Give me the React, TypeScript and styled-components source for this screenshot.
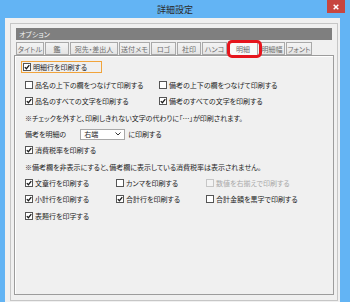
import React from "react";
import styled, { createGlobalStyle } from "styled-components";

const GlobalStyle = createGlobalStyle`
  html, body {
    margin: 0;
    padding: 0;
  }
  body {
    width: 350px;
    height: 302px;
    overflow: hidden;
    background: #63b4f4;
    font-family: "Noto Sans CJK JP", "Noto Sans", sans-serif;
    font-feature-settings: "palt";
  }
`;

const Window = styled.div`
  display: flex;
  flex-direction: column;
  width: 350px;
  height: 306px;
  background: #63b4f4;
  overflow: hidden;
`;

const TitleBar = styled.div`
  display: grid;
  grid-template-columns: 1fr auto 1fr;
  align-items: start;
  height: 18px;
  flex-shrink: 0;
`;

const Caption = styled.div`
  grid-column: 2;
  font-size: 9px;
  line-height: 20px;
  color: #2b2b2b;
`;

const CloseButton = styled.div`
  grid-column: 3;
  justify-self: end;
  width: 18px;
  height: 13px;
  margin-right: 5px;
  background: #c7463f;
  display: flex;
  align-items: center;
  justify-content: center;
`;

const Client = styled.div`
  flex: 1;
  margin: 0 10px 0 5px;
  padding: 5px 2px 0 5px;
  background: #f0f0f0;
`;

const Frame = styled.div`
  display: flex;
  flex-direction: column;
  box-sizing: border-box;
  height: 278px;
  border: 1px solid #c6c6c6;
  padding: 3px 3px 5px;
`;

const Header = styled.div`
  height: 12px;
  margin: 1px 2px 0;
  padding-left: 3px;
  background: #7f7f7f;
  color: #f4f4f4;
  font-size: 7px;
  line-height: 12px;
`;

const TabStrip = styled.div`
  display: flex;
  align-items: flex-end;
  gap: 1px;
  height: 15px;
  padding-left: 2px;
`;

const Tab = styled.div<{ $w: number; $active?: boolean }>`
  position: relative;
  z-index: ${(p) => (p.$active ? 1 : 0)};
  box-sizing: border-box;
  width: ${(p) => p.$w}px;
  height: ${(p) => (p.$active ? 15 : 13)}px;
  margin-bottom: ${(p) => (p.$active ? -1 : 0)}px;
  border: 1px solid #a9a9a9;
  border-bottom: ${(p) => (p.$active ? "none" : "1px solid #a9a9a9")};
  background: ${(p) =>
    p.$active ? "#f9f9f9" : "linear-gradient(#f4f4f4, #e4e4e4)"};
  color: #6e6e6e;
  font-size: 7px;
  display: flex;
  align-items: center;
  justify-content: center;
  white-space: nowrap;

  ${(p) =>
    p.$active &&
    `
    &::after {
      content: "";
      position: absolute;
      left: -2px;
      right: -5px;
      top: -2px;
      bottom: -2px;
      border: 3px solid #e6141c;
      border-radius: 5px;
    }
  `}
`;

const Panel = styled.div`
  flex: 1;
  display: flex;
  flex-direction: column;
  border: 1px solid #9c9c9c;
  box-shadow: inset 1px 1px 0 #fff;
  background: #f0f0f0;
  padding: 5px 0 0 10px;
  color: #1e1e1e;
  font-size: 7px;
`;

const FocusRow = styled.div`
  display: flex;
  align-items: center;
  align-self: flex-start;
  box-sizing: border-box;
  width: 81px;
  height: 12px;
  margin-left: -4px;
  margin-bottom: 4px;
  padding-left: 1px;
  border: 1px solid #f1a43c;
`;

const Row = styled.div`
  display: flex;
  align-items: center;
  gap: 2px;
  height: 16.3px;
  white-space: nowrap;
`;

const GridRow = styled.div<{ $cols: string }>`
  display: grid;
  grid-template-columns: ${(p) => p.$cols};
  align-items: center;
  height: 16.3px;
`;

const Label = styled.label<{ $disabled?: boolean }>`
  display: flex;
  align-items: center;
  gap: 2px;
  white-space: nowrap;
  color: ${(p) => (p.$disabled ? "#a9a9a9" : "#1e1e1e")};
`;

const Box = styled.span<{ $disabled?: boolean }>`
  display: inline-flex;
  align-items: center;
  justify-content: center;
  flex-shrink: 0;
  box-sizing: border-box;
  width: 8px;
  height: 8px;
  border: 1px solid ${(p) => (p.$disabled ? "#c6c6c6" : "#555")};
  background: ${(p) => (p.$disabled ? "#f3f3f3" : "#fff")};
`;

const Note = styled.div`
  display: flex;
  align-items: center;
  height: 16.3px;
  white-space: nowrap;
`;

const Select = styled.div`
  display: flex;
  align-items: center;
  justify-content: space-between;
  box-sizing: border-box;
  width: 45px;
  height: 11px;
  margin: 0 1px 0 12px;
  padding: 0 3px 0 3px;
  border: 1px solid #a8a8a8;
  background: #fff;
`;

const Check = ({
  checked,
  disabled,
  children,
}: {
  checked?: boolean;
  disabled?: boolean;
  children: React.ReactNode;
}) => (
  <Label $disabled={disabled}>
    <Box $disabled={disabled}>
      {checked && (
        <svg width="6" height="6" viewBox="0 0 6 6">
          <path
            d="M0.8 3.1 L2.4 4.7 L5.3 1.1"
            fill="none"
            stroke="#1a1a1a"
            strokeWidth="1.3"
          />
        </svg>
      )}
    </Box>
    {children}
  </Label>
);

const tabs = [
  { label: "タイトル", w: 28 },
  { label: "鑑", w: 24 },
  { label: "宛先・差出人", w: 48 },
  { label: "送付メモ", w: 31 },
  { label: "ロゴ", w: 25 },
  { label: "社印", w: 24 },
  { label: "ハンコ", w: 25 },
  { label: "明細", w: 30, active: true },
  { label: "明細幅", w: 26 },
  { label: "フォント", w: 26 },
];

export default function App() {
  return (
    <>
      <GlobalStyle />
      <Window>
        <TitleBar>
          <Caption>詳細設定</Caption>
          <CloseButton>
            <svg width="6" height="6" viewBox="0 0 6 6">
              <path
                d="M0.7 0.7 L5.3 5.3 M5.3 0.7 L0.7 5.3"
                stroke="#fff"
                strokeWidth="1.5"
              />
            </svg>
          </CloseButton>
        </TitleBar>
        <Client>
          <Frame>
            <Header>オプション</Header>
            <TabStrip>
              {tabs.map((t) => (
                <Tab key={t.label} $w={t.w} $active={t.active}>
                  {t.label}
                </Tab>
              ))}
            </TabStrip>
            <Panel>
              <FocusRow>
                <Check checked>明細行を印刷する</Check>
              </FocusRow>
              <GridRow $cols="134px auto">
                <Check>品名の上下の欄をつなげて印刷する</Check>
                <Check>備考の上下の欄をつなげて印刷する</Check>
              </GridRow>
              <GridRow $cols="134px auto">
                <Check checked>品名のすべての文字を印刷する</Check>
                <Check checked>備考のすべての文字を印刷する</Check>
              </GridRow>
              <Note>
                ※チェックを外すと、印刷しきれない文字の代わりに「…」が印刷されます。
              </Note>
              <Row>
                備考を明細の
                <Select>
                  右端
                  <svg width="6" height="4" viewBox="0 0 6 4">
                    <path
                      d="M0.5 0.5 L3 3 L5.5 0.5"
                      fill="none"
                      stroke="#333"
                      strokeWidth="1"
                    />
                  </svg>
                </Select>
                に印刷する
              </Row>
              <Row>
                <Check checked>消費税率を印刷する</Check>
              </Row>
              <Note>
                ※備考欄を非表示にすると、備考欄に表示している消費税率は表示されません。
              </Note>
              <GridRow $cols="91px 90px auto">
                <Check checked>文章行を印刷する</Check>
                <Check>カンマを印刷する</Check>
                <Check disabled>数値を右揃えで印刷する</Check>
              </GridRow>
              <GridRow $cols="91px 90px auto">
                <Check checked>小計行を印刷する</Check>
                <Check checked>合計行を印刷する</Check>
                <Check>合計金額を黒字で印刷する</Check>
              </GridRow>
              <Row>
                <Check checked>表題行を印字する</Check>
              </Row>
            </Panel>
          </Frame>
        </Client>
      </Window>
    </>
  );
}
